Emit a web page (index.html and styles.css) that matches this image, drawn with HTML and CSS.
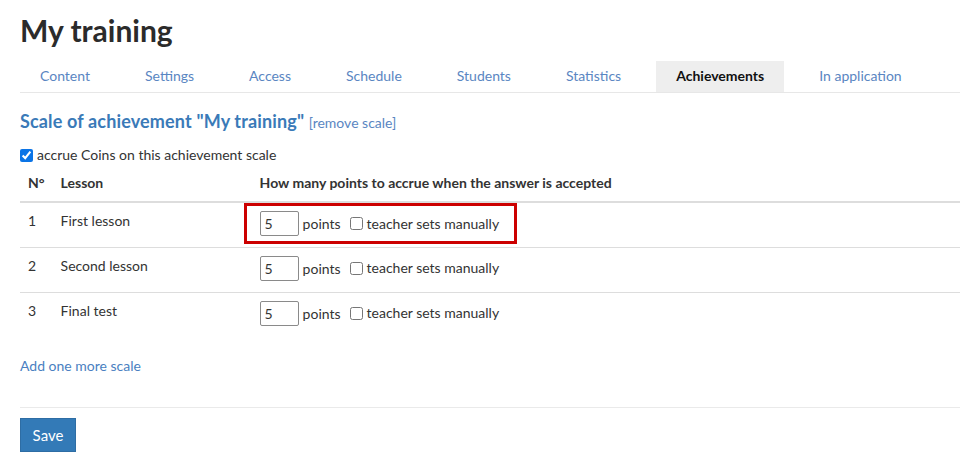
FILE: index.html
```html
<!DOCTYPE html>
<html>
<head>
<meta charset="utf-8">
<link rel="stylesheet" href="styles.css">
</head>
<body>
<div class="page">
  <h1 class="title">My training</h1>
  <ul class="tabs">
    <li class="tab"><a href="#">Content</a></li>
    <li class="tab"><a href="#">Settings</a></li>
    <li class="tab"><a href="#">Access</a></li>
    <li class="tab"><a href="#">Schedule</a></li>
    <li class="tab"><a href="#">Students</a></li>
    <li class="tab"><a href="#">Statistics</a></li>
    <li class="tab active"><a href="#">Achievements</a></li>
    <li class="tab"><a href="#">In application</a></li>
  </ul>

  <h3 class="scale-title">Scale of achievement "My training" <a class="remove" href="#">[remove scale]</a></h3>

  <label class="accrue"><input type="checkbox" class="cb cb-checked" checked> accrue Coins on this achievement scale</label>

  <table class="lessons">
    <thead>
      <tr>
        <th class="c-num">N°</th>
        <th class="c-lesson">Lesson</th>
        <th>How many points to accrue when the answer is accepted</th>
      </tr>
    </thead>
    <tbody>
      <tr>
        <td class="c-num">1</td>
        <td class="c-lesson">First lesson</td>
        <td class="c-points">
          <div class="points highlighted">
            <input class="pts-input" type="text" value="5"> <span class="pts-label">points</span>
            <label class="manual"><input type="checkbox" class="cb"> teacher sets manually</label>
          </div>
        </td>
      </tr>
      <tr>
        <td class="c-num">2</td>
        <td class="c-lesson">Second lesson</td>
        <td class="c-points">
          <div class="points">
            <input class="pts-input" type="text" value="5"> <span class="pts-label">points</span>
            <label class="manual"><input type="checkbox" class="cb"> teacher sets manually</label>
          </div>
        </td>
      </tr>
      <tr>
        <td class="c-num">3</td>
        <td class="c-lesson">Final test</td>
        <td class="c-points">
          <div class="points">
            <input class="pts-input" type="text" value="5"> <span class="pts-label">points</span>
            <label class="manual"><input type="checkbox" class="cb"> teacher sets manually</label>
          </div>
        </td>
      </tr>
    </tbody>
  </table>

  <a class="add-scale" href="#">Add one more scale</a>

  <hr class="divider">

  <button class="btn-save" type="button">Save</button>
</div>
</body>
</html>
```
FILE: styles.css
```css
* { box-sizing: border-box; }
html, body { margin: 0; padding: 0; background: #fff; }
body {
  font-family: "Lato", "Open Sans", "Liberation Sans", sans-serif;
  font-size: 14px;
  line-height: 20px;
  color: #333;
}
a { color: #4a7fc1; text-decoration: none; }

.page { padding: 0 4px 0 20px; }

.title {
  margin: 0;
  padding-top: 12px;
  font-size: 30px;
  line-height: 36px;
  font-weight: 700;
  color: #2b2b2b;
  height: 61px;
}

.tabs {
  list-style: none;
  margin: 0;
  padding: 0;
  display: flex;
  border-bottom: 1px solid #e7e7e7;
}
.tab { margin-right: 15px; }
.tab a {
  display: block;
  padding: 0 20px;
  height: 31px;
  line-height: 30px;
  color: #5a86c2;
}
.tab.active a { background: #eeeeee; color: #111; font-weight: 700; }

.scale-title {
  margin: 0;
  padding-top: 16px;
  font-size: 18px;
  line-height: 24px;
  font-weight: 700;
  letter-spacing: 0.15px;
  color: #3a7ab8;
}
.remove { font-size: 14px; font-weight: 400; letter-spacing: 0; color: #5a86c2; }

.accrue {
  display: flex;
  align-items: center;
  gap: 4px;
  margin-top: 10px;
  height: 20px;
}
.cb { margin: 0; width: 13px; height: 13px; }
.cb-checked { accent-color: #0b74e6; }

.lessons {
  width: 100%;
  border-collapse: collapse;
  margin-top: 0;
}
.lessons th, .lessons td {
  text-align: left;
  vertical-align: top;
  padding: 8px;
}
.lessons th {
  font-weight: 700;
  border-bottom: 2px solid #dddddd;
}
.lessons td { border-top: 1px solid #dddddd; height: 45px; }
.lessons tbody tr:first-child td { border-top: 0; }
.lessons tbody tr:last-child td { height: 44px; }
.c-num { width: 32px; }
.c-lesson { width: 199px; }
.lessons td.c-points { padding: 0 8px 0 8px; }

.points {
  display: inline-flex;
  align-items: center;
  padding-top: 8px;
}
.highlighted {
  margin-left: -16px;
  padding: 5px 15px 5px 13px;
  border: 3px solid #c00;
  height: 41px;
  align-items: flex-start;
}
.pts-input {
  width: 39px;
  height: 25px;
  border: 1px solid #8a8a8a;
  border-radius: 2px;
  font: inherit;
  color: #333;
  padding: 0 4px;
  margin: 0;
}
.pts-label { margin-left: 4px; line-height: 25px; }
.manual { display: inline-flex; align-items: center; gap: 4px; margin-left: 9px; height: 25px; }

.add-scale { display: block; margin-top: 20px; }

.divider {
  margin: 31px 0 10px;
  border: 0;
  border-top: 1px solid #eaeaea;
}

.btn-save {
  font-family: inherit;
  font-size: 15px;
  color: #fff;
  background: #337ab7;
  border: 1px solid #2e6da4;
  height: 34px;
  width: 56px;
  padding: 0;
  cursor: pointer;
}
```
